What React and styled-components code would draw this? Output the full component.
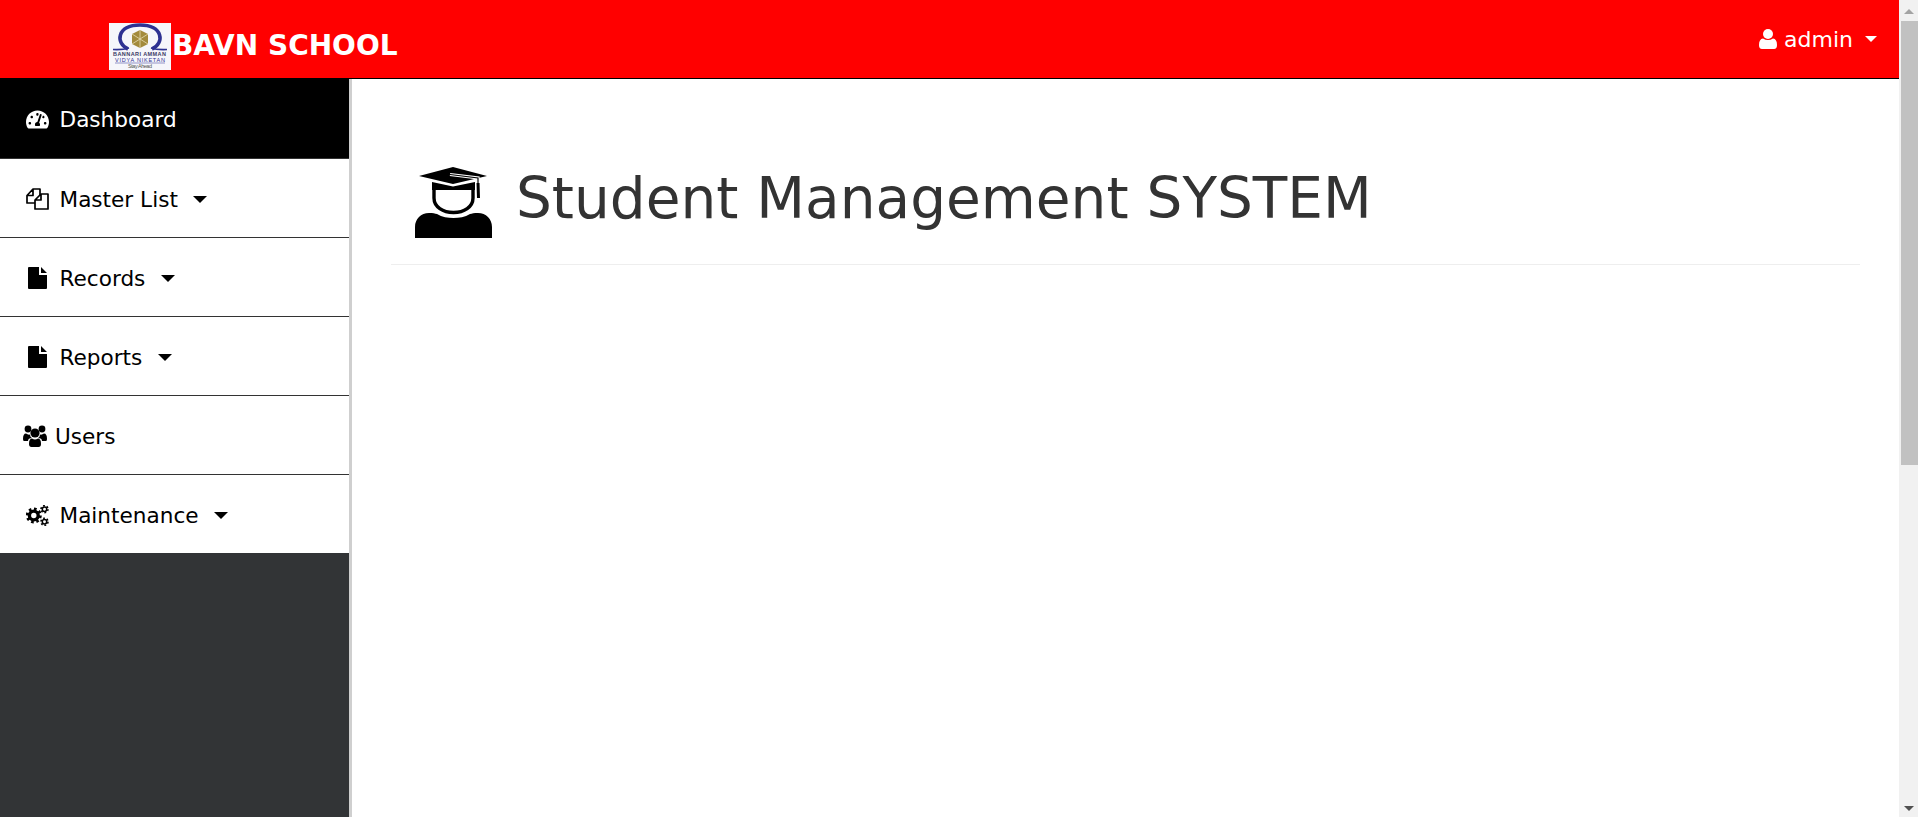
import React from 'react';
import styled, { createGlobalStyle } from 'styled-components';
import { FaTachometerAlt } from 'react-icons/fa';

const Global = createGlobalStyle`
    * { box-sizing: border-box; }
    html, body { height: 100%; overflow: hidden; }
    body {
        margin: 0;
        font-family: "DejaVu Sans", Verdana, sans-serif;
        background: #fff;
    }
`;

const FilesIcon = () => (
    <svg width="23" height="22" viewBox="0 0 23 22" fill="none" stroke="#000" strokeWidth="1.7" strokeLinejoin="round">
        <path d="M1 7.5 L7 1 H14 V8 M9 15 H1 V7.5 H7 V1" />
        <path d="M9 12 L15 6 H22 V21 H9 Z M9 12 H15 V6" />
    </svg>
);

const FileIcon = () => (
    <svg width="19" height="22" viewBox="0 0 19 22">
        <path d="M0 1 Q0 0 1 0 H11 V8 H19 V21 Q19 22 18 22 H1 Q0 22 0 21 Z M13 0 L19 6 H13 Z" fill="#000" />
    </svg>
);

const UsersIcon = () => (
    <svg width="24" height="22" viewBox="0 0 24 22" fill="#000">
        <circle cx="5" cy="4" r="3.4" />
        <circle cx="19" cy="4" r="3.4" />
        <circle cx="12" cy="8" r="4.6" />
        <path d="M0 14 Q0 8.5 3 8.5 Q5 10 7 9.5 Q7 12 9 13 Q5 13 5 16 H1 Q0 16 0 14 Z" />
        <path d="M24 14 Q24 8.5 21 8.5 Q19 10 17 9.5 Q17 12 15 13 Q19 13 19 16 H23 Q24 16 24 14 Z" />
        <path d="M6 19 Q6 13.5 9 13.5 Q12 15.5 15 13.5 Q18 13.5 18 19 Q18 22 15.5 22 H8.5 Q6 22 6 19 Z" />
    </svg>
);

const CogsIcon = () => (
    <svg width="23" height="21" viewBox="0 0 23 21" fill="none" stroke="#000">
        <circle cx="7.8" cy="10.5" r="4.4" strokeWidth="3.4" />
        <circle cx="7.8" cy="10.5" r="6.6" strokeWidth="2.8" strokeDasharray="2.6 2.58" />
        <circle cx="18.5" cy="4.2" r="2.2" strokeWidth="1.5" />
        <circle cx="18.5" cy="4.2" r="3.5" strokeWidth="1.6" strokeDasharray="1.83 1.83" />
        <circle cx="18.5" cy="16.8" r="2.2" strokeWidth="1.5" />
        <circle cx="18.5" cy="16.8" r="3.5" strokeWidth="1.6" strokeDasharray="1.83 1.83" />
    </svg>
);

const UserIcon = () => (
    <svg width="18" height="20" viewBox="0 0 18 20" fill="#fff">
        <circle cx="9" cy="5" r="5" />
        <path d="M0 16 Q0 10 4 9.5 Q9 12.5 14 9.5 Q18 10 18 16 Q18 20 15 20 H3 Q0 20 0 16 Z" />
    </svg>
);

const LogoImage = () => (
    <svg width="62" height="47" viewBox="0 0 62 47">
        <rect width="62" height="47" fill="#f6f6fb" />
        <path d="M19 26 C6 20 8 2 31 2 C54 2 56 20 43 26" fill="none" stroke="#2e3192" strokeWidth="3.6" />
        <path d="M4 26.5 Q14 27 20 25 M58 26.5 Q48 27 42 25" fill="none" stroke="#2e3192" strokeWidth="1.6" />
        <path d="M31 7 L39 11 V21 L31 25 L23 21 V11 Z" fill="#a38a3c" />
        <path d="M31 7 V25 M23 11 L39 21 M39 11 L23 21" stroke="#e6dcb4" strokeWidth="0.8" />
        <CrestText x="4" y="33" textLength="53" fontWeight="bold" fill="#3a3a66">BANNARI AMMAN</CrestText>
        <CrestText x="6" y="39" textLength="50" fill="#2e3192">VIDYA NIKETAN</CrestText>
        <path d="M6 40 H56" stroke="#2e3192" strokeWidth="0.5" />
        <CrestText x="19" y="45" textLength="24" fill="#555">Stay Ahead</CrestText>
    </svg>
);

const GradIcon = () => (
    <svg width="77" height="71" viewBox="0 0 77 71">
        <path d="M38 0 L72 9 L38 17 L4 9 Z" fill="#000" />
        <path d="M17 15 L38 19.5 L60 15 V23 H17 Z" fill="#000" />
        <path d="M35 7.5 L63 11 V24" fill="none" stroke="#fff" strokeWidth="3.2" />
        <path d="M35 7.5 L63 11 V24" fill="none" stroke="#000" strokeWidth="1.2" />
        <path d="M61.5 16 H64.5 L65 31 H62 Z" fill="#000" />
        <path d="M19 20 V31 C19 40 28 45.5 38.5 45.5 C49 45.5 58 40 58 31 V20" fill="none" stroke="#000" strokeWidth="3.4" />
        <path d="M0 71 V60 C0 52 6 46 14 46 C18 46 20 46.5 22 47 C27 50 33 51 38.5 51 C44 51 50 50 55 47 C57 46.5 59 46 63 46 C71 46 77 52 77 60 V71 Z" fill="#000" />
    </svg>
);

const menu = [
    { label: 'Dashboard', icon: <FaTachometerAlt size={23} />, active: true },
    { label: 'Master List', icon: <FilesIcon />, caret: true },
    { label: 'Records', icon: <FileIcon />, caret: true },
    { label: 'Reports', icon: <FileIcon />, caret: true },
    { label: 'Users', icon: <UsersIcon />, tight: true },
    { label: 'Maintenance', icon: <CogsIcon />, caret: true },
];

export default function App() {
    return (
        <Shell>
            <Global />
            <Page>
                <TopBar>
                    <Brand>
                        <LogoImage />
                        <BrandName>BAVN SCHOOL</BrandName>
                    </Brand>
                    <UserMenu>
                        <UserIcon />
                        <span>admin</span>
                        <Caret $color="#fff" $size={6} />
                    </UserMenu>
                </TopBar>
                <Body>
                    <Sidebar>
                        {menu.map(item => (
                            <MenuItem key={item.label} $active={item.active} $tight={item.tight}>
                                <IconBox $tight={item.tight}>{item.icon}</IconBox>
                                <span>{item.label}</span>
                                {item.caret ? <Caret $color="#000" $size={7} /> : null}
                            </MenuItem>
                        ))}
                    </Sidebar>
                    <Main>
                        <Heading>
                            <GradIcon />
                            <HeadingText>Student Management SYSTEM</HeadingText>
                        </Heading>
                    </Main>
                </Body>
            </Page>
            <ScrollBar>
                <ArrowUp />
                <Thumb />
                <ArrowDown />
            </ScrollBar>
        </Shell>
    );
}

const Shell = styled.div`
    height: 100vh;
    display: flex;
    overflow: hidden;
`;

const Page = styled.div`
    flex: 1;
    min-width: 0;
    display: flex;
    flex-direction: column;
`;

const CrestText = styled.text`
    font-family: "Liberation Sans", sans-serif;
    font-size: 5.5px;
`;

const TopBar = styled.header`
    height: 79px;
    flex-shrink: 0;
    background: #ff0000;
    border-bottom: 1px solid #000;
    display: flex;
    justify-content: space-between;
    padding: 0 22px 0 109px;
    color: #fff;
`;

const Brand = styled.div`
    display: flex;
    align-items: center;
    gap: 1px;
    padding-top: 15px;
    height: 77px;
`;

const BrandName = styled.span`
    font-size: 28px;
    font-weight: bold;
    margin-top: -2px;
`;

const UserMenu = styled.div`
    display: flex;
    align-items: center;
    gap: 7px;
    font-size: 22px;
    height: 78px;
`;

const Body = styled.div`
    flex: 1;
    display: flex;
    min-height: 0;
`;

const Sidebar = styled.nav`
    width: 352px;
    flex-shrink: 0;
    background: #323436;
    border-right: 3px solid #cfcfcf;
`;

const MenuItem = styled.a`
    height: ${props => props.$active ? '80px' : '79px'};
    display: flex;
    align-items: center;
    gap: ${props => props.$tight ? '8px' : '10.5px'};
    padding: 2px 0 0 ${props => props.$tight ? '23px' : '26px'};
    font-size: 21.6px;
    background: ${props => props.$active ? '#000' : '#fff'};
    color: ${props => props.$active ? '#fff' : '#000'};
    border-bottom: 1px solid #333;

    &:last-child {
        height: 78px;
        border-bottom: 0;
    }
`;

const IconBox = styled.span`
    width: ${props => props.$tight ? '24px' : '23px'};
    display: flex;
    justify-content: center;
    flex-shrink: 0;
`;

const Caret = styled.i`
    width: 0;
    height: 0;
    margin-left: 5px;
    border-left: ${props => props.$size}px solid transparent;
    border-right: ${props => props.$size}px solid transparent;
    border-top: ${props => props.$size}px solid ${props => props.$color};
`;

const Main = styled.main`
    flex: 1;
    padding: 88px 39px 0;
`;

const Heading = styled.h1`
    margin: 0;
    padding: 0 0 26px 24px;
    border-bottom: 1px solid #eee;
    display: flex;
    align-items: center;
    gap: 24px;
    font-size: 56.5px;
    line-height: 1;
    font-weight: normal;
    color: #333;
`;

const HeadingText = styled.span`
    margin-bottom: 6px;
`;

const ScrollBar = styled.div`
    width: 19px;
    flex-shrink: 0;
    background: #f1f1f1;
    display: flex;
    flex-direction: column;
    align-items: center;
`;

const ArrowUp = styled.div`
    width: 0;
    height: 0;
    margin: 9px 0 7px;
    border-left: 5px solid transparent;
    border-right: 5px solid transparent;
    border-bottom: 5px solid #a3a3a3;
`;

const Thumb = styled.div`
    width: 17px;
    height: 444px;
    align-self: flex-end;
    background: #c1c1c1;
`;

const ArrowDown = styled.div`
    width: 0;
    height: 0;
    margin-top: auto;
    margin-bottom: 6px;
    border-left: 5px solid transparent;
    border-right: 5px solid transparent;
    border-top: 5px solid #505050;
`;
